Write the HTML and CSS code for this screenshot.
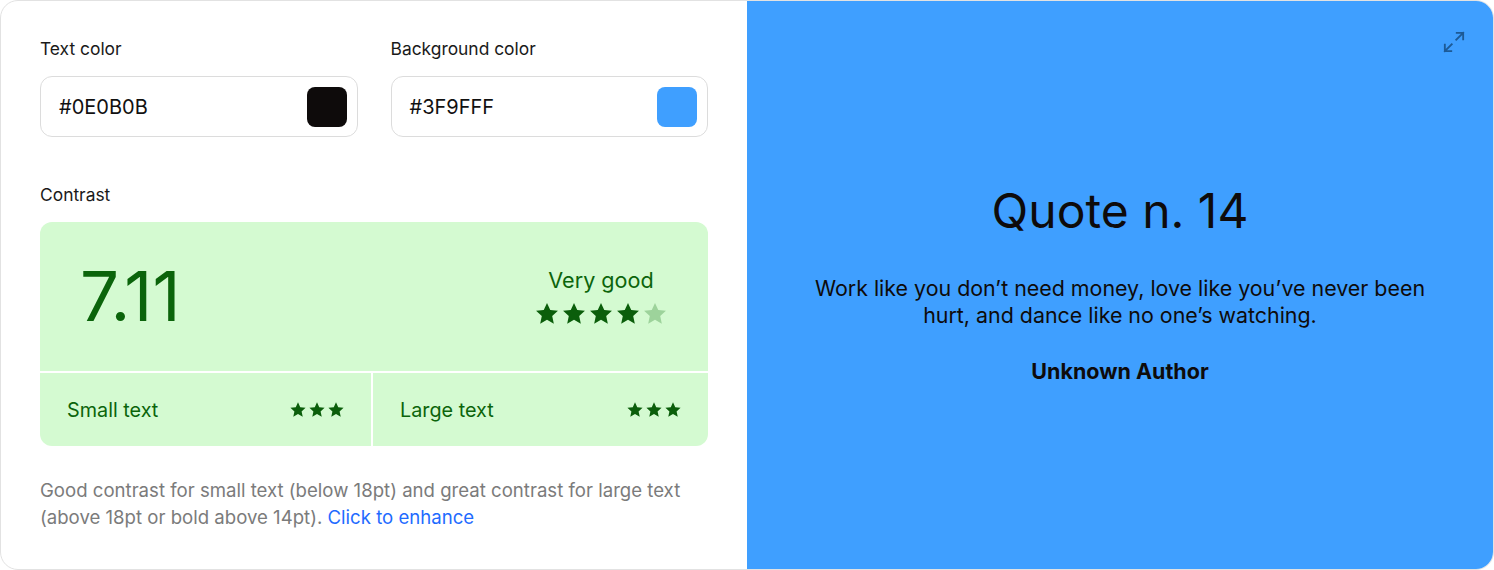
FILE: index.html
```html
<!DOCTYPE html>
<html lang="en">
<head>
<meta charset="utf-8">
<title>Contrast checker</title>
<link rel="stylesheet" href="styles.css">
</head>
<body>
<div class="card">
  <section class="controls">
    <div class="pickers">
      <div class="picker">
        <div class="label">Text color</div>
        <div class="input">
          <span class="hex">#0E0B0B</span>
          <span class="swatch swatch-dark"></span>
        </div>
      </div>
      <div class="picker">
        <div class="label">Background color</div>
        <div class="input">
          <span class="hex">#3F9FFF</span>
          <span class="swatch swatch-blue"></span>
        </div>
      </div>
    </div>
    <div class="label contrast-label">Contrast</div>
    <div class="score">
      <div class="score-main">
        <div class="ratio">7.11</div>
        <div class="rating">
          <div class="rating-text">Very good</div>
          <div class="stars stars-big">
            <svg viewBox="0 0 24 24"><path d="M12 1.8l3 6.5 7.1.8-5.3 4.8 1.5 7-6.3-3.6-6.3 3.6 1.5-7L1.9 9.1 9 8.3z"/></svg>
            <svg viewBox="0 0 24 24"><path d="M12 1.8l3 6.5 7.1.8-5.3 4.8 1.5 7-6.3-3.6-6.3 3.6 1.5-7L1.9 9.1 9 8.3z"/></svg>
            <svg viewBox="0 0 24 24"><path d="M12 1.8l3 6.5 7.1.8-5.3 4.8 1.5 7-6.3-3.6-6.3 3.6 1.5-7L1.9 9.1 9 8.3z"/></svg>
            <svg viewBox="0 0 24 24"><path d="M12 1.8l3 6.5 7.1.8-5.3 4.8 1.5 7-6.3-3.6-6.3 3.6 1.5-7L1.9 9.1 9 8.3z"/></svg>
            <svg class="dim" viewBox="0 0 24 24"><path d="M12 1.8l3 6.5 7.1.8-5.3 4.8 1.5 7-6.3-3.6-6.3 3.6 1.5-7L1.9 9.1 9 8.3z"/></svg>
          </div>
        </div>
      </div>
      <div class="score-row">
        <div class="cell">
          <span>Small text</span>
          <div class="stars stars-small">
            <svg viewBox="0 0 24 24"><path d="M12 1.8l3 6.5 7.1.8-5.3 4.8 1.5 7-6.3-3.6-6.3 3.6 1.5-7L1.9 9.1 9 8.3z"/></svg>
            <svg viewBox="0 0 24 24"><path d="M12 1.8l3 6.5 7.1.8-5.3 4.8 1.5 7-6.3-3.6-6.3 3.6 1.5-7L1.9 9.1 9 8.3z"/></svg>
            <svg viewBox="0 0 24 24"><path d="M12 1.8l3 6.5 7.1.8-5.3 4.8 1.5 7-6.3-3.6-6.3 3.6 1.5-7L1.9 9.1 9 8.3z"/></svg>
          </div>
        </div>
        <div class="cell">
          <span>Large text</span>
          <div class="stars stars-small">
            <svg viewBox="0 0 24 24"><path d="M12 1.8l3 6.5 7.1.8-5.3 4.8 1.5 7-6.3-3.6-6.3 3.6 1.5-7L1.9 9.1 9 8.3z"/></svg>
            <svg viewBox="0 0 24 24"><path d="M12 1.8l3 6.5 7.1.8-5.3 4.8 1.5 7-6.3-3.6-6.3 3.6 1.5-7L1.9 9.1 9 8.3z"/></svg>
            <svg viewBox="0 0 24 24"><path d="M12 1.8l3 6.5 7.1.8-5.3 4.8 1.5 7-6.3-3.6-6.3 3.6 1.5-7L1.9 9.1 9 8.3z"/></svg>
          </div>
        </div>
      </div>
    </div>
    <p class="note">Good contrast for small text (below 18pt) and great contrast for large text (above 18pt or bold above 14pt). <a href="#" class="link">Click to enhance</a></p>
  </section>
  <section class="preview">
    <svg class="expand" viewBox="0 0 24 24" fill="none" stroke="currentColor" stroke-width="2" stroke-linecap="square">
      <path d="M14.5 9.5L22 2M15 2h7v7M9.5 14.5L2 22M2 15v7h7"/>
    </svg>
    <h1 class="quote-title">Quote n. 14</h1>
    <p class="quote">Work like you don’t need money, love like you’ve never been hurt, and dance like no one’s watching.</p>
    <p class="author">Unknown Author</p>
  </section>
</div>
</body>
</html>
```
FILE: styles.css
```css
* { box-sizing: border-box; }
html, body { margin: 0; padding: 0; }
body {
  font-family: Inter, "Noto Sans", "Liberation Sans", sans-serif;
  color: #0e0b0b;
  background: #ffffff;
}
.card {
  width: 1494px;
  height: 570px;
  display: flex;
  border: 1px solid #e2e2e2;
  border-radius: 18px;
  overflow: hidden;
  background: #ffffff;
}
.controls {
  width: 746px;
  padding: 37px 39px 0 39px;
  display: flex;
  flex-direction: column;
}
.pickers {
  display: flex;
  gap: 33px;
}
.picker { flex: 1; }
.label {
  font-size: 17.4px;
  line-height: 22px;
  color: #1a1a1a;
}
.input {
  margin-top: 16px;
  height: 61px;
  border: 1px solid #dcdcdc;
  border-radius: 12px;
  display: flex;
  align-items: center;
  justify-content: space-between;
  padding: 0 10px 0 18px;
}
.hex {
  font-size: 20px;
  color: #111;
}
.swatch {
  width: 40px;
  height: 40px;
  border-radius: 8px;
}
.swatch-dark { background: #0e0b0b; }
.swatch-blue { background: #3f9fff; }
.contrast-label { margin-top: 47px; }
.score {
  margin-top: 16px;
  border-radius: 12px;
  overflow: hidden;
  background: #ffffff;
  display: flex;
  flex-direction: column;
  gap: 2px;
}
.score-main {
  height: 149px;
  background: #d4fad1;
  display: flex;
  align-items: center;
  justify-content: space-between;
  padding: 0 40px 0 40px;
  color: #0b640b;
}
.ratio {
  font-size: 69px;
  line-height: 1;
}
.rating {
  display: flex;
  flex-direction: column;
  align-items: center;
  gap: 8px;
  margin-top: 0;
}
.rating-text {
  font-size: 21.6px;
  line-height: 26px;
}
.stars {
  display: flex;
  fill: #0b5e0b;
}
.stars .dim { fill: #9dd39b; }
.stars-big { gap: 1px; }
.stars-big svg { width: 26px; height: 26px; }
.stars-small { gap: 1px; }
.stars-small svg { width: 18px; height: 18px; }
.score-row {
  height: 73px;
  display: grid;
  grid-template-columns: 331px 1fr;
  gap: 2px;
}
.cell {
  background: #d4fad1;
  display: flex;
  align-items: center;
  justify-content: space-between;
  padding: 0 26px 0 27px;
  font-size: 19.8px;
  color: #0b640b;
}
.note {
  margin: 31px 0 0 0;
  font-size: 18.6px;
  line-height: 27px;
  color: #7b7b7b;
}
.link {
  color: #1f6bff;
  text-decoration: none;
}
.preview {
  flex: 1;
  position: relative;
  background: #3f9fff;
  display: flex;
  flex-direction: column;
  align-items: center;
  justify-content: center;
  text-align: center;
  padding-bottom: 2px;
}
.expand {
  position: absolute;
  top: 30px;
  right: 28px;
  width: 22px;
  height: 22px;
  color: #1d5a96;
}
.quote-title {
  margin: 0;
  font-size: 48px;
  font-weight: 400;
  line-height: 54px;
}
.quote {
  margin: 37px 0 0 0;
  max-width: 630px;
  font-size: 21.4px;
  line-height: 27px;
}
.author {
  margin: 29px 0 0 0;
  font-size: 21.5px;
  line-height: 27px;
  font-weight: 700;
}
```
